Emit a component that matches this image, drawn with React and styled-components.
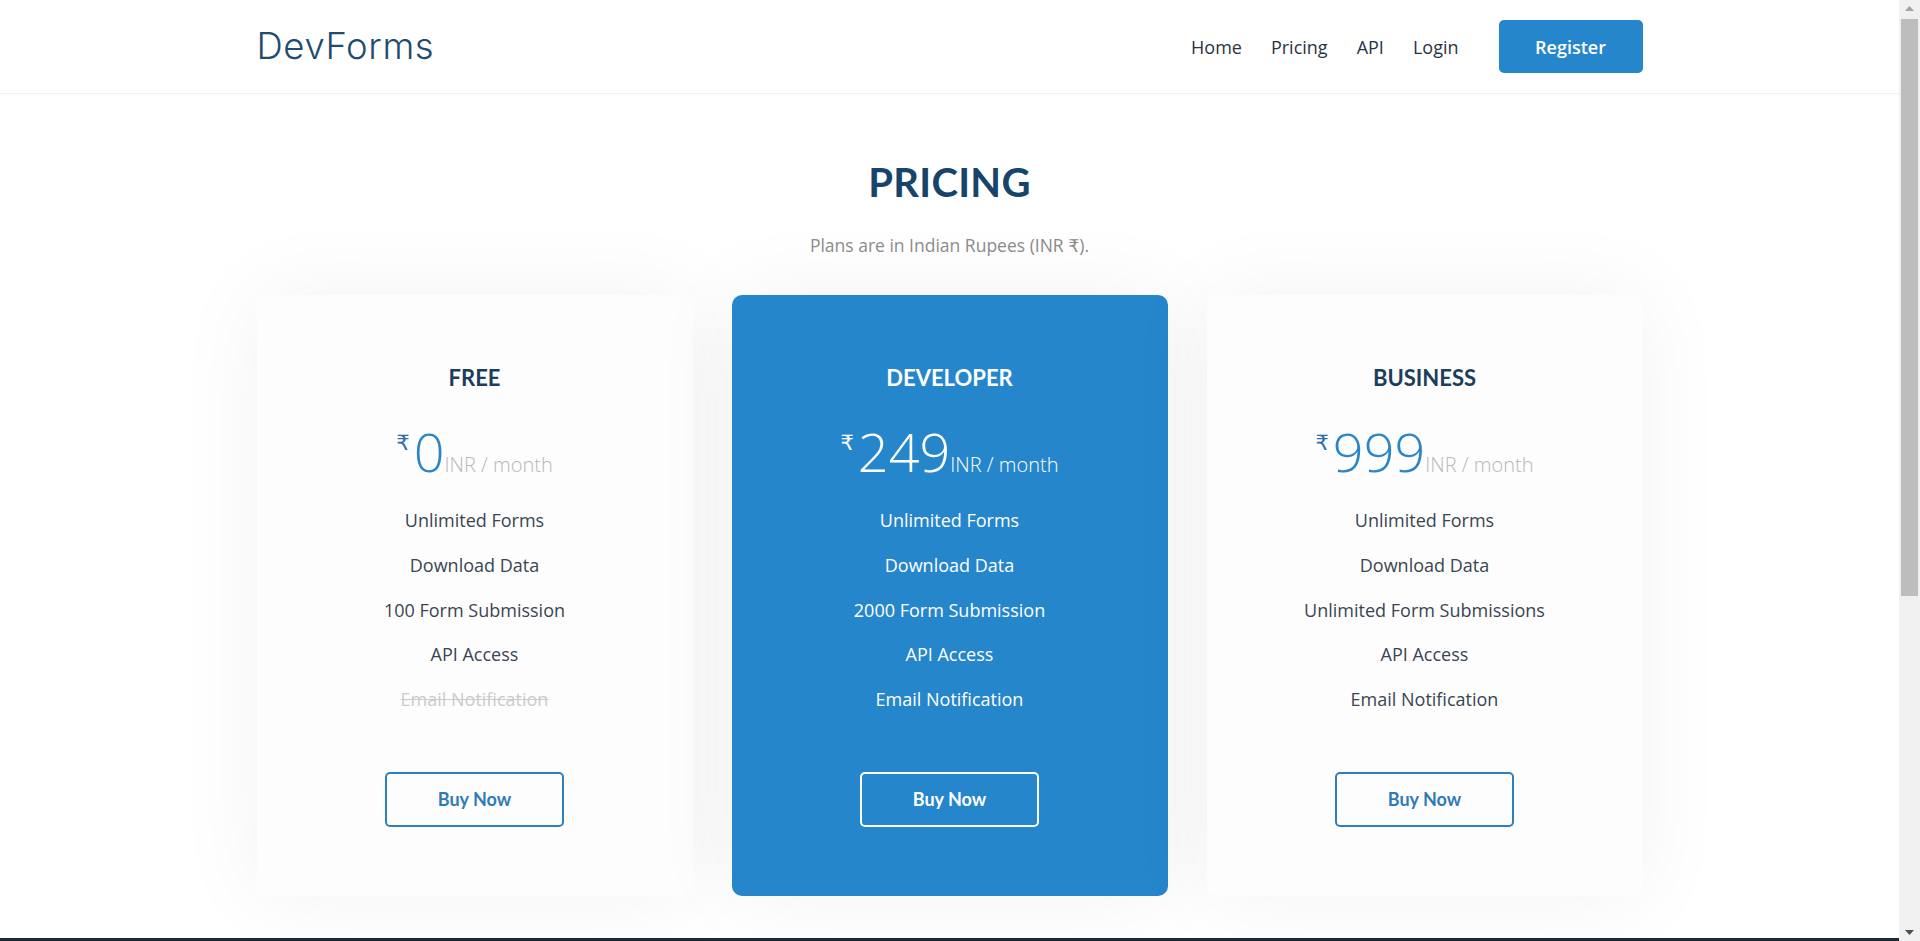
import React from "react";
import styled, { createGlobalStyle } from "styled-components";

const GlobalStyle = createGlobalStyle`
  html, body {
    margin: 0;
    padding: 0;
    height: 100%;
    overflow: hidden;
    background: #ffffff;
    font-family: "Open Sans", "DejaVu Sans", sans-serif;
  }
  * {
    box-sizing: border-box;
  }
`;

const Shell = styled.div`
  height: 100vh;
  display: flex;
`;

const Main = styled.main`
  flex: 1;
  min-width: 0;
  overflow-y: auto;
  scrollbar-width: none;
  &::-webkit-scrollbar {
    display: none;
  }
`;

const ScrollRail = styled.div`
  width: 21px;
  flex-shrink: 0;
  background: #f0f0f0;
  display: flex;
  flex-direction: column;
  align-items: center;
  padding: 0 2px;
`;

const RailArrow = styled.div`
  height: 17px;
  width: 100%;
  display: flex;
  align-items: center;
  justify-content: center;
  margin-top: ${(p) => (p.$down ? "auto" : "0")};
`;

const Thumb = styled.div`
  width: 100%;
  height: 577px;
  margin-top: 2px;
  background: #bdbdbd;
`;

const Header = styled.header`
  height: 94px;
  border-bottom: 1px solid #eef2f2;
`;

const Container = styled.div`
  width: 1386px;
  margin: 0 auto;
`;

const HeaderInner = styled(Container)`
  height: 100%;
  display: flex;
  align-items: center;
  justify-content: space-between;
`;

const Logo = styled.a`
  font-family: "Inter", sans-serif;
  font-weight: 300;
  font-size: 36.5px;
  letter-spacing: 0.6px;
  color: #1f4c70;
  text-decoration: none;
  margin-top: -2px;
`;

const Nav = styled.nav`
  display: flex;
  align-items: center;
  gap: 29px;
`;

const NavLink = styled.a`
  font-size: 18px;
  color: #2b3440;
  text-decoration: none;
`;

const RegisterButton = styled.button`
  margin-left: 11px;
  width: 144px;
  height: 53px;
  border: none;
  border-radius: 5px;
  background: #2686cc;
  color: #ffffff;
  font-family: "Open Sans", sans-serif;
  font-weight: 600;
  font-size: 18px;
  cursor: pointer;
`;

const PricingSection = styled.section`
  padding: 64px 0 42px;
  text-align: center;
`;

const Title = styled.h2`
  margin: 0;
  font-family: "Lato", sans-serif;
  font-weight: 700;
  font-size: 40px;
  line-height: 48px;
  letter-spacing: 0.3px;
  color: #17446b;
`;

const Subtitle = styled.p`
  margin: 27px 0 0;
  font-size: 17.5px;
  line-height: 24px;
  color: #8c8c8c;
`;

const CardGrid = styled(Container)`
  margin-top: 38px;
  display: grid;
  grid-template-columns: repeat(3, 1fr);
  gap: 39px;
`;

const Card = styled.div`
  height: 601px;
  padding-top: 68px;
  border-radius: 10px;
  background: ${(p) => (p.$featured ? "#2586cc" : "#fdfdfd")};
  box-shadow: 0 0 90px rgba(0, 0, 0, 0.055);
  display: flex;
  flex-direction: column;
  align-items: center;
`;

const PlanName = styled.h3`
  margin: 0;
  font-family: "Lato", sans-serif;
  font-weight: 700;
  font-size: 22px;
  line-height: 30px;
  color: ${(p) => (p.$featured ? "#ffffff" : "#1c3d5c")};
`;

const PriceRow = styled.div`
  margin-top: 26px;
  display: flex;
  align-items: baseline;
  justify-content: center;
  color: ${(p) => (p.$featured ? "#ffffff" : "#2a86c9")};
`;

const Currency = styled.span`
  align-self: flex-start;
  margin-top: 13px;
  margin-right: 4px;
  font-family: "DejaVu Sans", sans-serif;
  font-size: 21px;
  line-height: 22px;
  color: ${(p) => (p.$featured ? "#ffffff" : "#2a6fa8")};
`;

const Amount = styled.span`
  font-weight: 300;
  font-size: 54px;
  line-height: 64px;
`;

const Period = styled.span`
  font-weight: 300;
  font-size: 20px;
  color: ${(p) => (p.$featured ? "#ffffff" : "#b8b8b8")};
`;

const FeatureList = styled.ul`
  list-style: none;
  margin: 15px 0 0;
  padding: 0;
`;

const Feature = styled.li`
  font-size: 18px;
  line-height: 44.75px;
  color: ${(p) =>
    p.$off ? "#cbcbcb" : p.$featured ? "#ffffff" : "#3a4552"};
  text-decoration: ${(p) => (p.$off ? "line-through" : "none")};
`;

const BuyButton = styled.button`
  margin-top: 50px;
  width: 179px;
  height: 55px;
  border-radius: 5px;
  border: 2px solid ${(p) => (p.$featured ? "#ffffff" : "#2f7fbf")};
  background: transparent;
  color: ${(p) => (p.$featured ? "#ffffff" : "#2f7ab8")};
  font-family: "Lato", sans-serif;
  font-weight: 700;
  font-size: 18px;
  cursor: pointer;
`;

const Footer = styled.footer`
  min-height: 540px;
  padding-top: 80px;
  background: #1b2a39;
  color: #9aa7b4;
  text-align: center;
  font-size: 15px;
`;

const plans = [
  {
    name: "FREE",
    price: "0",
    features: [
      { text: "Unlimited Forms" },
      { text: "Download Data" },
      { text: "100 Form Submission" },
      { text: "API Access" },
      { text: "Email Notification", off: true },
    ],
  },
  {
    name: "DEVELOPER",
    price: "249",
    featured: true,
    features: [
      { text: "Unlimited Forms" },
      { text: "Download Data" },
      { text: "2000 Form Submission" },
      { text: "API Access" },
      { text: "Email Notification" },
    ],
  },
  {
    name: "BUSINESS",
    price: "999",
    features: [
      { text: "Unlimited Forms" },
      { text: "Download Data" },
      { text: "Unlimited Form Submissions" },
      { text: "API Access" },
      { text: "Email Notification" },
    ],
  },
];

function PlanCard({ plan }) {
  const featured = !!plan.featured;
  return (
    <Card $featured={featured}>
      <PlanName $featured={featured}>{plan.name}</PlanName>
      <PriceRow $featured={featured}>
        <Currency $featured={featured}>₹</Currency>
        <Amount>{plan.price}</Amount>
        <Period $featured={featured}>INR / month</Period>
      </PriceRow>
      <FeatureList>
        {plan.features.map((f) => (
          <Feature key={f.text} $featured={featured} $off={f.off}>
            {f.text}
          </Feature>
        ))}
      </FeatureList>
      <BuyButton type="button" $featured={featured}>
        Buy Now
      </BuyButton>
    </Card>
  );
}

function Scrollbar() {
  return (
    <ScrollRail>
      <RailArrow>
        <svg width="9" height="5" viewBox="0 0 9 5">
          <polygon points="0,5 4.5,0 9,5" fill="#a3a3a3" />
        </svg>
      </RailArrow>
      <Thumb />
      <RailArrow $down>
        <svg width="9" height="5" viewBox="0 0 9 5">
          <polygon points="0,0 4.5,5 9,0" fill="#505050" />
        </svg>
      </RailArrow>
    </ScrollRail>
  );
}

export default function App() {
  return (
    <Shell>
      <GlobalStyle />
      <Main>
        <Header>
          <HeaderInner>
            <Logo href="#">DevForms</Logo>
            <Nav>
              <NavLink href="#">Home</NavLink>
              <NavLink href="#">Pricing</NavLink>
              <NavLink href="#">API</NavLink>
              <NavLink href="#">Login</NavLink>
              <RegisterButton type="button">Register</RegisterButton>
            </Nav>
          </HeaderInner>
        </Header>
        <PricingSection>
          <Title>PRICING</Title>
          <Subtitle>Plans are in Indian Rupees (INR ₹).</Subtitle>
          <CardGrid>
            {plans.map((plan) => (
              <PlanCard key={plan.name} plan={plan} />
            ))}
          </CardGrid>
        </PricingSection>
        <Footer>© DevForms. All rights reserved.</Footer>
      </Main>
      <Scrollbar />
    </Shell>
  );
}
